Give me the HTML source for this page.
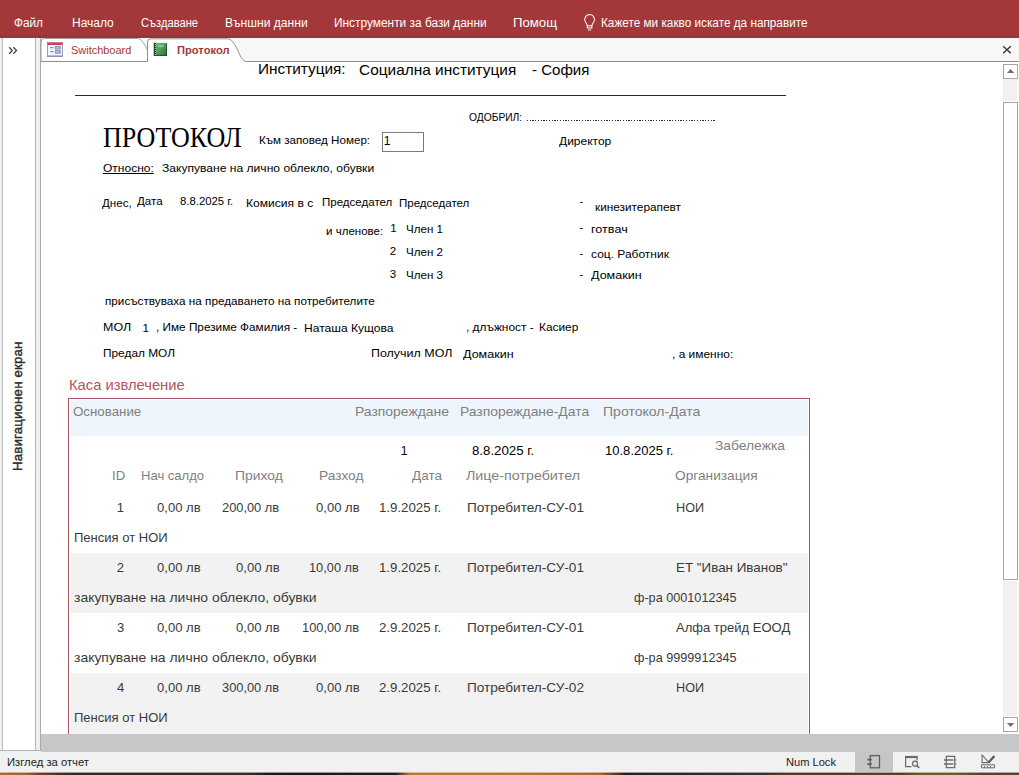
<!DOCTYPE html>
<html lang="bg"><head><meta charset="utf-8"><title>Протокол</title>
<style>
html,body{margin:0;padding:0;}
body{width:1019px;height:775px;overflow:hidden;position:relative;background:#fff;font-family:"Liberation Sans",sans-serif;}
.a{position:absolute;}
.t{position:absolute;white-space:nowrap;transform-origin:0 50%;}
</style></head><body>
<!-- ribbon bar -->
<div class="a" style="left:0;top:0;width:1019px;height:38px;background:#a4373a;"></div>
<div class="a" style="left:0;top:35px;width:1019px;height:3px;background:#9b3338;"></div>
<!-- tab strip -->
<div class="a" style="left:0;top:38px;width:1019px;height:23px;background:#f7f7f8;"></div>
<!-- nav pane -->
<div class="a" style="left:0;top:38px;width:40px;height:714px;background:#f0f0f0;"></div>
<div class="a" style="left:2px;top:38px;width:1px;height:714px;background:#b8b8b8;"></div>
<div class="a" style="left:3px;top:38px;width:32px;height:714px;background:#fff;"></div>
<div class="a" style="left:35px;top:38px;width:1px;height:714px;background:#b4b4b4;"></div>
<div class="a" style="left:40px;top:38px;width:1px;height:714px;background:#a9a9a9;"></div>
<!-- document area -->
<div class="a" style="left:41px;top:61px;width:978px;height:674px;background:#fff;"></div>
<!-- tabs -->
<svg class="a" style="left:0;top:0" width="1019" height="64" viewBox="0 0 1019 64">
 <path d="M41 61.5 V42 Q41 38.5 44.5 38.5 H137.4 C140.9 38.5 143.9 43 147 49 C150.2 55.5 151.9 61.5 156.4 61.5 Z" fill="#fff" stroke="#a0a0a0" stroke-width="1"/>
 <path d="M147.5 62 V42 Q147.5 38.5 151 38.5 H227.5 C231 38.5 234 43 237.1 49 C240.3 55.5 242 61.5 246.5 61.5 H1019 V64 H147.5 Z" fill="#fff" stroke="none"/>
 <path d="M147.5 61.5 V42 Q147.5 38.8 151 38.8 H227.5 C231 38.8 234 43 237.1 49 C240.3 55.5 242 61.5 246.5 61.5 H1019" fill="none" stroke="#8f8f8f" stroke-width="1"/>
 <path d="M41 61.5 H147.5" stroke="#8f8f8f" stroke-width="1"/>
</svg>
<!-- switchboard icon -->
<svg class="a" style="left:47px;top:42px" width="16" height="15" viewBox="0 0 16 15">
 <rect x="0.5" y="0.5" width="15" height="14" fill="#f1f4fa" stroke="#9aa0bd"/>
 <rect x="0.5" y="0" width="15" height="3" fill="#c6405a"/>
 <rect x="1" y="0.3" width="14" height="0.8" fill="#e08a9a"/>
 <rect x="3" y="5.2" width="3.5" height="1" fill="#6f7fa6"/><rect x="3" y="9.2" width="3.5" height="1" fill="#6f7fa6"/>
 <rect x="8.3" y="4.5" width="5" height="2.6" fill="#aebbd6" stroke="#7482a8" stroke-width=".7"/><rect x="8.3" y="8.6" width="5" height="2.6" fill="#aebbd6" stroke="#7482a8" stroke-width=".7"/>
 <rect x="0.5" y="13.5" width="15" height="1" fill="#7c84a6"/>
</svg>
<!-- report icon -->
<svg class="a" style="left:153px;top:42px" width="15" height="15" viewBox="0 0 15 15">
 <defs><linearGradient id="gg" x1="0" y1="0" x2="1" y2="1"><stop offset="0" stop-color="#7cc07d"/><stop offset="0.5" stop-color="#4f9e58"/><stop offset="1" stop-color="#2c6e37"/></linearGradient></defs>
 <rect x="0.8" y="0.9" width="13" height="13" fill="url(#gg)"/>
 <rect x="0.8" y="0.9" width="2.2" height="13" fill="#1f3f27"/>
 <path d="M2.4 2 V13.5" stroke="#cfe8d0" stroke-width="0.9" stroke-dasharray="1 1"/>
 <rect x="5" y="3.2" width="5.5" height="1.8" fill="#9ed3a2" opacity=".8"/>
 <rect x="13" y="1.5" width="0.9" height="12.4" fill="#1f4a2a"/><rect x="1" y="13" width="12.9" height="0.9" fill="#1f4a2a"/>
</svg>
<!-- nav chevrons -->
<svg class="a" style="left:8px;top:46px" width="10" height="9" viewBox="0 0 10 9"><path d="M1.2 1.3 L4.3 4.5 L1.2 7.7 M5.4 1.3 L8.5 4.5 L5.4 7.7" fill="none" stroke="#444" stroke-width="1.25"/></svg>
<!-- close X -->
<svg class="a" style="left:1002px;top:45px" width="10" height="10" viewBox="0 0 10 10"><path d="M1.2 1.2 L8.8 8.3 M8.8 1.2 L1.2 8.3" stroke="#333" stroke-width="1.3"/></svg>
<!-- lightbulb -->
<svg class="a" style="left:582px;top:12px" width="16" height="20" viewBox="0 0 16 20"><path d="M7.6 2.6 A4.9 4.9 0 0 0 3.6 10.3 C4.6 11.8 5.2 12.4 5.3 13.8 H9.9 C10 12.4 10.6 11.8 11.6 10.3 A4.9 4.9 0 0 0 7.6 2.6 Z M5.3 13.8 V16 H9.9 V13.8 M6.2 18 H9" fill="none" stroke="#fff" stroke-width="1.05"/></svg>

<!-- report line -->
<div class="a" style="left:75px;top:95px;width:711px;height:1px;background:#2a2a2a;"></div>
<!-- dotted line -->
<div class="a" style="left:527px;top:119.6px;width:188px;height:1.4px;background:repeating-linear-gradient(90deg,#2a2a2a 0,#2a2a2a 1.25px,transparent 1.25px,transparent 2.74px);"></div>
<!-- input box -->
<div class="a" style="left:382px;top:132px;width:40px;height:18px;border:1px solid #7a7a7a;background:#fff;box-sizing:content-box"></div>

<!-- subreport -->
<div class="a" style="left:68px;top:398px;width:742px;height:336px;background:#a5565e;"></div>
<div class="a" style="left:69px;top:399px;width:740px;height:335px;background:#fff;"></div>
<div class="a" style="left:70px;top:400px;width:738px;height:36px;background:#eff5fc;"></div>
<div class="a" style="left:70px;top:553px;width:738px;height:60px;background:#f2f2f2;"></div>
<div class="a" style="left:70px;top:673px;width:738px;height:61px;background:#f2f2f2;"></div>

<!-- scrollbar -->
<div class="a" style="left:1003px;top:79px;width:14px;height:637px;background:#f1f1f1;"></div>
<div class="a" style="left:1003px;top:64px;width:13px;height:13px;border:1px solid #a6a6a6;background:#fff;box-sizing:content-box"></div>
<svg class="a" style="left:1006px;top:68px" width="9" height="6" viewBox="0 0 9 6"><path d="M1 5 L4.6 1 L8.2 5 Z" fill="#6e6e6e"/></svg>
<div class="a" style="left:1003px;top:101px;width:15px;height:480px;background:#fff;"></div>
<div class="a" style="left:1003px;top:102px;width:13px;height:476px;border:1px solid #a6a6a6;background:#fff;box-sizing:content-box"></div>
<div class="a" style="left:1003px;top:717px;width:13px;height:13px;border:1px solid #a6a6a6;background:#fff;box-sizing:content-box"></div>
<svg class="a" style="left:1006px;top:722px" width="9" height="6" viewBox="0 0 9 6"><path d="M1 1 L4.6 5 L8.2 1 Z" fill="#6e6e6e"/></svg>

<!-- bottom gray bar -->
<div class="a" style="left:41px;top:734px;width:978px;height:18px;background:#c6c7c9;"></div>
<!-- nav pane bottom -->
<div class="a" style="left:0;top:750px;width:41px;height:1px;background:#b4b4b4;"></div>
<!-- status bar -->
<div class="a" style="left:0;top:751px;width:41px;height:1px;background:#f1f1f1;"></div>
<div class="a" style="left:0;top:752px;width:1019px;height:20px;background:#f1f1f1;"></div>
<div class="a" style="left:855px;top:752px;width:38px;height:20px;background:#c6c6c6;"></div>
<!-- status icons -->
<svg class="a" style="left:850px;top:752px" width="169" height="20" viewBox="0 0 169 20">
 <g fill="none" stroke="#5f5f5f">
  <rect x="20.2" y="3.6" width="9.3" height="12.2" stroke-width="1.3"/>
  <path d="M17.3 7.6 H21.8 M17.3 12.2 H21.8" stroke-width="1.7"/>
 </g>
 <g fill="none" stroke="#6a6a6a">
  <path d="M55.6 4.5 V14.6 H61.5 M67 4.5 V8.5" stroke-width="1.2"/>
  <path d="M55 5 H67.6" stroke-width="2.2"/>
  <circle cx="65" cy="11.7" r="2.5" stroke-width="1.2"/>
  <path d="M66.9 13.6 L69.3 16" stroke-width="1.5"/>
 </g>
 <g fill="none" stroke="#6a6a6a">
  <path d="M95.6 4.4 H105.3 M95.6 15.6 H105.3 M96.3 4 V16 M104.7 4 V16" stroke-width="1.2"/>
  <path d="M94 8 H103 M94 12 H103" stroke-width="1.6"/>
  <path d="M103.5 8 H106.4 M103.5 12 H106.4" stroke-width="1"/>
 </g>
 <g fill="none" stroke="#6a6a6a">
  <path d="M132.1 3 V10.6 H139 Z" stroke-width="1.1"/>
  <path d="M138.6 10.4 L144.4 4" stroke="#5a5a5a" stroke-width="2.3"/>
  <path d="M131.5 12.8 H144.5 V15.8 H131.5 Z" stroke-width="1"/>
  <path d="M134.5 14 V15.8 M137.5 14 V15.8 M140.5 14 V15.8" stroke-width="0.9"/>
 </g>
</svg>
<!-- desktop strip -->
<div class="a" style="left:0;top:772px;width:1019px;height:3px;background:linear-gradient(90deg,#a86a30 0px,#a06430 24px,#6a4028 40px,#3a2820 70px,#3a2a24 250px,#201818 270px,#221a1a 395px,#b87838 410px,#b87434 520px,#a86430 600px,#2a2020 625px,#3a3030 760px,#5a3a28 790px,#5a3c28 900px,#6a5a30 920px,#6a5a30 960px,#5a4030 980px,#5a4030 1019px);"></div>
<div class="a" style="left:0;top:772px;width:1019px;height:1px;background:rgba(241,230,230,0.6);"></div>

<!-- vertical nav text -->
<span class="a" style="left:11px;top:471px;transform-origin:0 0;transform:rotate(-90deg);white-space:nowrap;font-size:13.33px;letter-spacing:0.12px;-webkit-text-stroke:0.4px #2b2b2b;color:#2b2b2b;line-height:14px;display:block;">Навигационен екран</span>

<span class="t" style="left:13.5px;top:17.00px;font-size:12.5px;line-height:12.5px;color:#fff;font-family:'Liberation Sans', sans-serif;transform:scaleX(0.9419);">Файл</span>
<span class="t" style="left:71.5px;top:17.00px;font-size:12.5px;line-height:12.5px;color:#fff;font-family:'Liberation Sans', sans-serif;transform:scaleX(0.9591);">Начало</span>
<span class="t" style="left:140.5px;top:17.00px;font-size:12.5px;line-height:12.5px;color:#fff;font-family:'Liberation Sans', sans-serif;transform:scaleX(0.8938);">Създаване</span>
<span class="t" style="left:224.5px;top:17.00px;font-size:12.5px;line-height:12.5px;color:#fff;font-family:'Liberation Sans', sans-serif;transform:scaleX(0.9671);">Външни данни</span>
<span class="t" style="left:333.5px;top:17.00px;font-size:12.5px;line-height:12.5px;color:#fff;font-family:'Liberation Sans', sans-serif;transform:scaleX(0.9512);">Инструменти за бази данни</span>
<span class="t" style="left:512.5px;top:17.00px;font-size:12.5px;line-height:12.5px;color:#fff;font-family:'Liberation Sans', sans-serif;transform:scaleX(1.0524);">Помощ</span>
<span class="t" style="left:600.5px;top:17.00px;font-size:12.5px;line-height:12.5px;color:#fff;font-family:'Liberation Sans', sans-serif;transform:scaleX(0.9416);">Кажете ми какво искате да направите</span>
<span class="t" style="left:71.1px;top:45.00px;font-size:10.67px;line-height:10.67px;color:#a4373a;font-family:'Liberation Sans', sans-serif;transform:scaleX(1.0271);">Switchboard</span>
<span class="t" style="left:177.4px;top:45.00px;font-size:10.67px;line-height:10.67px;color:#a4373a;font-family:'Liberation Sans', sans-serif;font-weight:bold;transform:scaleX(1.0460);">Протокол</span>
<span class="t" style="left:257.5px;top:61.00px;font-size:15px;line-height:15px;color:#000;font-family:'Liberation Sans', sans-serif;transform:scaleX(1.0233);">Институция:</span>
<span class="t" style="left:359.0px;top:62.00px;font-size:15px;line-height:15px;color:#000;font-family:'Liberation Sans', sans-serif;transform:scaleX(1.0275);">Социална институция</span>
<span class="t" style="left:531.5px;top:62.00px;font-size:15px;line-height:15px;color:#000;font-family:'Liberation Sans', sans-serif;transform:scaleX(1.0035);">- София</span>
<span class="t" style="left:469.1px;top:112.00px;font-size:10.67px;line-height:10.67px;color:#000;font-family:'Liberation Sans', sans-serif;transform:scaleX(0.9618);">ОДОБРИЛ:</span>
<span class="t" style="left:102.7px;top:124.00px;font-size:28.5px;line-height:28.5px;color:#000;font-family:'Liberation Serif', serif;transform:scaleX(0.9132);">ПРОТОКОЛ</span>
<span class="t" style="left:258.5px;top:135.00px;font-size:11.5px;line-height:11.5px;color:#000;font-family:'Liberation Sans', sans-serif;transform:scaleX(1.0109);">Към заповед Номер:</span>
<span class="t" style="left:383.7px;top:135.00px;font-size:12px;line-height:12px;color:#000;font-family:'Liberation Sans', sans-serif;">1</span>
<span class="t" style="left:558.5px;top:136.00px;font-size:11.5px;line-height:11.5px;color:#000;font-family:'Liberation Sans', sans-serif;transform:scaleX(1.0440);">Директор</span>
<span class="t" style="left:102.5px;top:163.00px;font-size:11.5px;line-height:11.5px;color:#000;font-family:'Liberation Sans', sans-serif;transform:scaleX(1.0449);text-decoration:underline;">Относно:</span>
<span class="t" style="left:161.5px;top:163.00px;font-size:11.5px;line-height:11.5px;color:#000;font-family:'Liberation Sans', sans-serif;transform:scaleX(1.0505);">Закупуване на лично облекло, обувки</span>
<span class="t" style="left:101.5px;top:198.00px;font-size:11.5px;line-height:11.5px;color:#000;font-family:'Liberation Sans', sans-serif;transform:scaleX(1.0069);">Днес,</span>
<span class="t" style="left:136.5px;top:196.00px;font-size:11.5px;line-height:11.5px;color:#000;font-family:'Liberation Sans', sans-serif;transform:scaleX(1.0080);">Дата</span>
<span class="t" style="left:179.5px;top:196.00px;font-size:11.5px;line-height:11.5px;color:#000;font-family:'Liberation Sans', sans-serif;transform:scaleX(0.9852);">8.8.2025 г.</span>
<span class="t" style="left:245.5px;top:198.00px;font-size:11.5px;line-height:11.5px;color:#000;font-family:'Liberation Sans', sans-serif;transform:scaleX(1.0500);">Комисия в с</span>
<span class="t" style="left:321.5px;top:197.00px;font-size:11.5px;line-height:11.5px;color:#000;font-family:'Liberation Sans', sans-serif;transform:scaleX(1.0029);">Председател</span>
<span class="t" style="left:398.5px;top:198.00px;font-size:11.5px;line-height:11.5px;color:#000;font-family:'Liberation Sans', sans-serif;transform:scaleX(1.0029);">Председател</span>
<span class="t" style="left:579.5px;top:196.00px;font-size:11.5px;line-height:11.5px;color:#000;font-family:'Liberation Sans', sans-serif;">-</span>
<span class="t" style="left:594.5px;top:202.00px;font-size:11.5px;line-height:11.5px;color:#000;font-family:'Liberation Sans', sans-serif;transform:scaleX(1.0262);">кинезитерапевт</span>
<span class="t" style="left:325.5px;top:226.00px;font-size:11.5px;line-height:11.5px;color:#000;font-family:'Liberation Sans', sans-serif;transform:scaleX(1.0035);">и членове:</span>
<span class="t" style="left:390.2px;top:223.00px;font-size:11.5px;line-height:11.5px;color:#000;font-family:'Liberation Sans', sans-serif;">1</span>
<span class="t" style="left:405.5px;top:224.00px;font-size:11.5px;line-height:11.5px;color:#000;font-family:'Liberation Sans', sans-serif;transform:scaleX(1.0054);">Член 1</span>
<span class="t" style="left:579.5px;top:222.00px;font-size:11.5px;line-height:11.5px;color:#000;font-family:'Liberation Sans', sans-serif;">-</span>
<span class="t" style="left:590.5px;top:224.00px;font-size:11.5px;line-height:11.5px;color:#000;font-family:'Liberation Sans', sans-serif;transform:scaleX(1.0970);">готвач</span>
<span class="t" style="left:389.7px;top:246.00px;font-size:11.5px;line-height:11.5px;color:#000;font-family:'Liberation Sans', sans-serif;">2</span>
<span class="t" style="left:405.5px;top:247.00px;font-size:11.5px;line-height:11.5px;color:#000;font-family:'Liberation Sans', sans-serif;transform:scaleX(1.0054);">Член 2</span>
<span class="t" style="left:579.5px;top:247.50px;font-size:11.5px;line-height:11.5px;color:#000;font-family:'Liberation Sans', sans-serif;">-</span>
<span class="t" style="left:590.5px;top:249.00px;font-size:11.5px;line-height:11.5px;color:#000;font-family:'Liberation Sans', sans-serif;transform:scaleX(1.0427);">соц. Работник</span>
<span class="t" style="left:389.8px;top:269.00px;font-size:11.5px;line-height:11.5px;color:#000;font-family:'Liberation Sans', sans-serif;">3</span>
<span class="t" style="left:405.5px;top:270.00px;font-size:11.5px;line-height:11.5px;color:#000;font-family:'Liberation Sans', sans-serif;transform:scaleX(1.0054);">Член 3</span>
<span class="t" style="left:579.5px;top:268.50px;font-size:11.5px;line-height:11.5px;color:#000;font-family:'Liberation Sans', sans-serif;">-</span>
<span class="t" style="left:590.5px;top:270.00px;font-size:11.5px;line-height:11.5px;color:#000;font-family:'Liberation Sans', sans-serif;transform:scaleX(1.0913);">Домакин</span>
<span class="t" style="left:104.5px;top:296.00px;font-size:11.5px;line-height:11.5px;color:#000;font-family:'Liberation Sans', sans-serif;transform:scaleX(1.0196);">присъствуваха на предаването на потребителите</span>
<span class="t" style="left:102.5px;top:322.00px;font-size:11.5px;line-height:11.5px;color:#000;font-family:'Liberation Sans', sans-serif;transform:scaleX(1.0846);">МОЛ</span>
<span class="t" style="left:142.4px;top:323.00px;font-size:11.5px;line-height:11.5px;color:#000;font-family:'Liberation Sans', sans-serif;">1</span>
<span class="t" style="left:155.5px;top:322.00px;font-size:11.5px;line-height:11.5px;color:#000;font-family:'Liberation Sans', sans-serif;transform:scaleX(1.0232);">, Име Презиме Фамилия -</span>
<span class="t" style="left:303.5px;top:323.00px;font-size:11.5px;line-height:11.5px;color:#000;font-family:'Liberation Sans', sans-serif;transform:scaleX(1.0494);">Наташа Кущова</span>
<span class="t" style="left:465.5px;top:322.00px;font-size:11.5px;line-height:11.5px;color:#000;font-family:'Liberation Sans', sans-serif;transform:scaleX(1.0338);">, длъжност -</span>
<span class="t" style="left:538.5px;top:322.00px;font-size:11.5px;line-height:11.5px;color:#000;font-family:'Liberation Sans', sans-serif;transform:scaleX(1.0316);">Касиер</span>
<span class="t" style="left:102.5px;top:348.00px;font-size:11.5px;line-height:11.5px;color:#000;font-family:'Liberation Sans', sans-serif;transform:scaleX(1.0314);">Предал МОЛ</span>
<span class="t" style="left:370.5px;top:348.00px;font-size:11.5px;line-height:11.5px;color:#000;font-family:'Liberation Sans', sans-serif;transform:scaleX(1.0827);">Получил МОЛ</span>
<span class="t" style="left:462.5px;top:349.00px;font-size:11.5px;line-height:11.5px;color:#000;font-family:'Liberation Sans', sans-serif;transform:scaleX(1.0913);">Домакин</span>
<span class="t" style="left:671.5px;top:349.00px;font-size:11.5px;line-height:11.5px;color:#000;font-family:'Liberation Sans', sans-serif;transform:scaleX(1.0373);">, а именно:</span>
<span class="t" style="left:69.3px;top:377.00px;font-size:15px;line-height:15px;color:#b5535a;font-family:'Liberation Sans', sans-serif;transform:scaleX(0.9822);">Каса извлечение</span>
<span class="t" style="left:72.9px;top:405.00px;font-size:13px;line-height:13px;color:#7f7f7f;font-family:'Liberation Sans', sans-serif;transform:scaleX(1.0239);">Основание</span>
<span class="t" style="left:354.5px;top:405.00px;font-size:13px;line-height:13px;color:#7f7f7f;font-family:'Liberation Sans', sans-serif;transform:scaleX(1.0705);">Разпореждане</span>
<span class="t" style="left:459.5px;top:405.00px;font-size:13px;line-height:13px;color:#7f7f7f;font-family:'Liberation Sans', sans-serif;transform:scaleX(1.0678);">Разпореждане-Дата</span>
<span class="t" style="left:602.5px;top:405.00px;font-size:13px;line-height:13px;color:#7f7f7f;font-family:'Liberation Sans', sans-serif;transform:scaleX(1.0800);">Протокол-Дата</span>
<span class="t" style="left:400.6px;top:444.00px;font-size:13px;line-height:13px;color:#111;font-family:'Liberation Sans', sans-serif;">1</span>
<span class="t" style="left:471.5px;top:444.00px;font-size:13px;line-height:13px;color:#000;font-family:'Liberation Sans', sans-serif;transform:scaleX(1.0197);">8.8.2025 г.</span>
<span class="t" style="left:604.5px;top:444.00px;font-size:13px;line-height:13px;color:#000;font-family:'Liberation Sans', sans-serif;transform:scaleX(1.0029);">10.8.2025 г.</span>
<span class="t" style="left:714.5px;top:439.00px;font-size:13px;line-height:13px;color:#7f7f7f;font-family:'Liberation Sans', sans-serif;transform:scaleX(1.0636);">Забележка</span>
<span class="t" style="left:111.5px;top:469.00px;font-size:13px;line-height:13px;color:#7f7f7f;font-family:'Liberation Sans', sans-serif;transform:scaleX(1.0154);">ID</span>
<span class="t" style="left:140.5px;top:469.00px;font-size:13px;line-height:13px;color:#7f7f7f;font-family:'Liberation Sans', sans-serif;transform:scaleX(1.0032);">Нач салдо</span>
<span class="t" style="left:234.5px;top:469.00px;font-size:13px;line-height:13px;color:#7f7f7f;font-family:'Liberation Sans', sans-serif;transform:scaleX(1.0711);">Приход</span>
<span class="t" style="left:318.5px;top:469.00px;font-size:13px;line-height:13px;color:#7f7f7f;font-family:'Liberation Sans', sans-serif;transform:scaleX(1.0524);">Разход</span>
<span class="t" style="left:411.5px;top:469.00px;font-size:13px;line-height:13px;color:#7f7f7f;font-family:'Liberation Sans', sans-serif;transform:scaleX(1.0414);">Дата</span>
<span class="t" style="left:465.5px;top:469.00px;font-size:13px;line-height:13px;color:#7f7f7f;font-family:'Liberation Sans', sans-serif;transform:scaleX(1.0981);">Лице-потребител</span>
<span class="t" style="left:674.5px;top:469.00px;font-size:13px;line-height:13px;color:#7f7f7f;font-family:'Liberation Sans', sans-serif;transform:scaleX(1.0538);">Организация</span>
<span class="t" style="left:116.7px;top:501.00px;font-size:13px;line-height:13px;color:#3a3a3a;font-family:'Liberation Sans', sans-serif;">1</span>
<span class="t" style="left:156.5px;top:501.00px;font-size:13px;line-height:13px;color:#3a3a3a;font-family:'Liberation Sans', sans-serif;transform:scaleX(1.0047);">0,00 лв</span>
<span class="t" style="left:221.5px;top:501.00px;font-size:13px;line-height:13px;color:#3a3a3a;font-family:'Liberation Sans', sans-serif;transform:scaleX(0.9862);">200,00 лв</span>
<span class="t" style="left:315.5px;top:501.00px;font-size:13px;line-height:13px;color:#3a3a3a;font-family:'Liberation Sans', sans-serif;transform:scaleX(1.0047);">0,00 лв</span>
<span class="t" style="left:378.5px;top:501.00px;font-size:13px;line-height:13px;color:#3a3a3a;font-family:'Liberation Sans', sans-serif;transform:scaleX(1.0197);">1.9.2025 г.</span>
<span class="t" style="left:466.5px;top:501.00px;font-size:13px;line-height:13px;color:#3a3a3a;font-family:'Liberation Sans', sans-serif;transform:scaleX(1.0464);">Потребител-СУ-01</span>
<span class="t" style="left:675.5px;top:501.00px;font-size:13px;line-height:13px;color:#3a3a3a;font-family:'Liberation Sans', sans-serif;transform:scaleX(0.9724);">НОИ</span>
<span class="t" style="left:73.5px;top:531.00px;font-size:13px;line-height:13px;color:#3a3a3a;font-family:'Liberation Sans', sans-serif;transform:scaleX(1.0021);">Пенсия от НОИ</span>
<span class="t" style="left:116.8px;top:561.00px;font-size:13px;line-height:13px;color:#3a3a3a;font-family:'Liberation Sans', sans-serif;">2</span>
<span class="t" style="left:156.5px;top:561.00px;font-size:13px;line-height:13px;color:#3a3a3a;font-family:'Liberation Sans', sans-serif;transform:scaleX(1.0047);">0,00 лв</span>
<span class="t" style="left:235.5px;top:561.00px;font-size:13px;line-height:13px;color:#3a3a3a;font-family:'Liberation Sans', sans-serif;transform:scaleX(1.0047);">0,00 лв</span>
<span class="t" style="left:308.5px;top:561.00px;font-size:13px;line-height:13px;color:#3a3a3a;font-family:'Liberation Sans', sans-serif;transform:scaleX(0.9843);">10,00 лв</span>
<span class="t" style="left:378.5px;top:561.00px;font-size:13px;line-height:13px;color:#3a3a3a;font-family:'Liberation Sans', sans-serif;transform:scaleX(1.0197);">1.9.2025 г.</span>
<span class="t" style="left:466.5px;top:561.00px;font-size:13px;line-height:13px;color:#3a3a3a;font-family:'Liberation Sans', sans-serif;transform:scaleX(1.0464);">Потребител-СУ-01</span>
<span class="t" style="left:675.5px;top:561.00px;font-size:13px;line-height:13px;color:#3a3a3a;font-family:'Liberation Sans', sans-serif;transform:scaleX(1.0296);">ЕТ &quot;Иван Иванов&quot;</span>
<span class="t" style="left:73.5px;top:591.00px;font-size:13px;line-height:13px;color:#3a3a3a;font-family:'Liberation Sans', sans-serif;transform:scaleX(1.0717);">закупуване на лично облекло, обувки</span>
<span class="t" style="left:633.5px;top:591.00px;font-size:13px;line-height:13px;color:#3a3a3a;font-family:'Liberation Sans', sans-serif;transform:scaleX(0.9733);">ф-ра 0001012345</span>
<span class="t" style="left:116.9px;top:621.00px;font-size:13px;line-height:13px;color:#3a3a3a;font-family:'Liberation Sans', sans-serif;">3</span>
<span class="t" style="left:156.5px;top:621.00px;font-size:13px;line-height:13px;color:#3a3a3a;font-family:'Liberation Sans', sans-serif;transform:scaleX(1.0047);">0,00 лв</span>
<span class="t" style="left:235.5px;top:621.00px;font-size:13px;line-height:13px;color:#3a3a3a;font-family:'Liberation Sans', sans-serif;transform:scaleX(1.0047);">0,00 лв</span>
<span class="t" style="left:301.5px;top:621.00px;font-size:13px;line-height:13px;color:#3a3a3a;font-family:'Liberation Sans', sans-serif;transform:scaleX(0.9862);">100,00 лв</span>
<span class="t" style="left:378.5px;top:621.00px;font-size:13px;line-height:13px;color:#3a3a3a;font-family:'Liberation Sans', sans-serif;transform:scaleX(1.0197);">2.9.2025 г.</span>
<span class="t" style="left:466.5px;top:621.00px;font-size:13px;line-height:13px;color:#3a3a3a;font-family:'Liberation Sans', sans-serif;transform:scaleX(1.0464);">Потребител-СУ-01</span>
<span class="t" style="left:675.5px;top:621.00px;font-size:13px;line-height:13px;color:#3a3a3a;font-family:'Liberation Sans', sans-serif;transform:scaleX(1.0018);">Алфа трейд ЕООД</span>
<span class="t" style="left:73.5px;top:651.00px;font-size:13px;line-height:13px;color:#3a3a3a;font-family:'Liberation Sans', sans-serif;transform:scaleX(1.0717);">закупуване на лично облекло, обувки</span>
<span class="t" style="left:633.5px;top:651.00px;font-size:13px;line-height:13px;color:#3a3a3a;font-family:'Liberation Sans', sans-serif;transform:scaleX(0.9733);">ф-ра 9999912345</span>
<span class="t" style="left:117.1px;top:681.00px;font-size:13px;line-height:13px;color:#3a3a3a;font-family:'Liberation Sans', sans-serif;">4</span>
<span class="t" style="left:156.5px;top:681.00px;font-size:13px;line-height:13px;color:#3a3a3a;font-family:'Liberation Sans', sans-serif;transform:scaleX(1.0047);">0,00 лв</span>
<span class="t" style="left:221.5px;top:681.00px;font-size:13px;line-height:13px;color:#3a3a3a;font-family:'Liberation Sans', sans-serif;transform:scaleX(0.9862);">300,00 лв</span>
<span class="t" style="left:315.5px;top:681.00px;font-size:13px;line-height:13px;color:#3a3a3a;font-family:'Liberation Sans', sans-serif;transform:scaleX(1.0047);">0,00 лв</span>
<span class="t" style="left:378.5px;top:681.00px;font-size:13px;line-height:13px;color:#3a3a3a;font-family:'Liberation Sans', sans-serif;transform:scaleX(1.0197);">2.9.2025 г.</span>
<span class="t" style="left:466.5px;top:681.00px;font-size:13px;line-height:13px;color:#3a3a3a;font-family:'Liberation Sans', sans-serif;transform:scaleX(1.0464);">Потребител-СУ-02</span>
<span class="t" style="left:675.5px;top:681.00px;font-size:13px;line-height:13px;color:#3a3a3a;font-family:'Liberation Sans', sans-serif;transform:scaleX(0.9724);">НОИ</span>
<span class="t" style="left:73.5px;top:711.00px;font-size:13px;line-height:13px;color:#3a3a3a;font-family:'Liberation Sans', sans-serif;transform:scaleX(1.0021);">Пенсия от НОИ</span>
<span class="t" style="left:6.5px;top:757.00px;font-size:11.5px;line-height:11.5px;color:#222;font-family:'Liberation Sans', sans-serif;transform:scaleX(0.9786);">Изглед за отчет</span>
<span class="t" style="left:785.5px;top:757.00px;font-size:11.5px;line-height:11.5px;color:#222;font-family:'Liberation Sans', sans-serif;transform:scaleX(0.9654);">Num Lock</span>
</body></html>
